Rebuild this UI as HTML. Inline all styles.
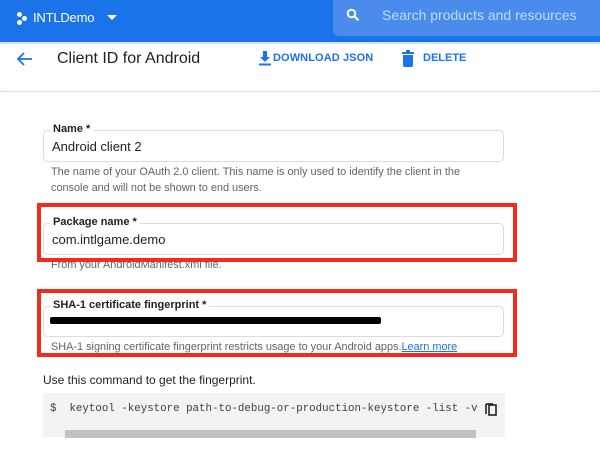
<!DOCTYPE html>
<html><head><style>
*{margin:0;padding:0;box-sizing:border-box}
body{width:600px;height:457px;overflow:hidden;background:#fff;font-family:"Liberation Sans",sans-serif;position:relative}
.a{position:absolute}
.field{position:absolute;border:1px solid #dadce0;border-radius:5px;left:43px;width:461px}
.lbl{position:absolute;top:-8px;left:6px;background:#fff;padding:0 3px;font-size:11px;font-weight:bold;color:#202124}
.val{position:absolute;left:8px;top:8px;font-size:13px;color:#202124}
.help{position:absolute;left:51px;font-size:10.9px;color:#5f6368;line-height:16px}
.red{position:absolute;border:4px solid #f22b1f}
</style></head><body>
<div class="a" style="left:0;top:0;width:600px;height:42px;background:#1a73e8"></div>
<div class="a" style="left:17px;top:12px;width:5px;height:5px;border-radius:50%;background:#fff"></div>
<div class="a" style="left:17px;top:20px;width:5px;height:5px;border-radius:50%;background:#fff"></div>
<div class="a" style="left:22px;top:16px;width:5px;height:5px;border-radius:50%;background:#fff"></div>
<div class="a" style="left:33px;top:10px;color:#fff;font-size:13px;letter-spacing:-0.2px">INTLDemo</div>
<div class="a" style="left:107px;top:15px;width:0;height:0;border-left:5px solid transparent;border-right:5px solid transparent;border-top:5px solid #fff"></div>
<div class="a" style="left:333px;top:0;width:267px;height:36px;background:#4a8bec;border-radius:0 0 0 6px"></div>
<svg class="a" style="left:346px;top:8px" width="14" height="14" viewBox="0 0 14 14"><circle cx="5.5" cy="5.5" r="3.8" stroke="#fff" stroke-width="2" fill="none"/><path d="M8.5 8.5L12.5 12.5" stroke="#fff" stroke-width="2.2"/></svg>
<div class="a" style="left:382px;top:7px;color:#c6dafc;font-size:14px">Search products and resources</div>
<div class="a" style="left:0;top:42px;width:600px;height:50px;border-bottom:1px solid #e0e0e0;box-shadow:inset 0 3px 3px -2px rgba(0,0,0,.25)"></div>
<svg class="a" style="left:15px;top:51px" width="18" height="16" viewBox="0 0 18 16"><path d="M17 8H3M9 2L3 8l6 6" stroke="#1a73e8" stroke-width="1.8" fill="none"/></svg>
<div class="a" style="left:57px;top:50px;font-size:16px;color:#202124">Client ID for Android</div>
<svg class="a" style="left:259px;top:51px" width="12" height="15" viewBox="0 0 12 15"><path d="M4 0h4v6h3L6 11 1 6h3z" fill="#1a73e8"/><rect x="0" y="12.5" width="12" height="2" fill="#1a73e8"/></svg>
<div class="a" style="left:273px;top:52px;font-size:11px;color:#1a73e8;font-weight:bold;letter-spacing:.1px">DOWNLOAD JSON</div>
<svg class="a" style="left:402px;top:50px" width="12" height="17" viewBox="0 0 12 17"><rect x="0" y="2" width="12" height="2" fill="#1a73e8"/><rect x="4" y="0" width="4" height="2" fill="#1a73e8"/><path d="M1 5h10v10a2 2 0 0 1-2 2H3a2 2 0 0 1-2-2z" fill="#1a73e8"/></svg>
<div class="a" style="left:423px;top:52px;font-size:11px;color:#1a73e8;font-weight:bold">DELETE</div>

<div class="field" style="top:130px;height:32px"><div class="lbl">Name *</div><div class="val">Android client 2</div></div>
<div class="help" style="top:164px">The name of your OAuth 2.0 client. This name is only used to identify the client in the<br>console and will not be shown to end users.</div>

<div class="field" style="top:223px;height:32px"><div class="lbl">Package name *</div><div class="val">com.intlgame.demo</div></div>
<div class="help" style="top:257px">From your AndroidManifest.xml file.</div>
<div class="red" style="left:37px;top:203px;width:480px;height:59px"></div>

<div class="field" style="top:306px;height:31px"><div class="lbl">SHA-1 certificate fingerprint *</div></div>
<div class="a" style="left:50px;top:317px;width:331px;height:7px;background:#000;border-radius:2px"></div>
<div class="help" style="top:339px">SHA-1 signing certificate fingerprint restricts usage to your Android apps.<span style="color:#1a73e8;text-decoration:underline">Learn more</span></div>
<div class="red" style="left:37px;top:289px;width:480px;height:68px"></div>

<div class="a" style="left:43px;top:373px;font-size:12px;color:#202124">Use this command to get the fingerprint.</div>
<div class="a" style="left:43px;top:393px;width:462px;height:44px;background:#f1f3f4"></div>
<div class="a" style="left:50px;top:403px;font-family:'Liberation Mono',monospace;font-size:10.8px;color:#3c4043;white-space:pre">$  keytool -keystore path-to-debug-or-production-keystore -list -v</div>
<svg class="a" style="left:485px;top:402px" width="12" height="14" viewBox="0 0 12 14"><path d="M1 2v10" stroke="#202124" stroke-width="1.6"/><rect x="4" y="3" width="7" height="10" stroke="#202124" stroke-width="1.6" fill="none"/><path d="M1 2h7" stroke="#202124" stroke-width="1.6"/></svg>
<div class="a" style="left:65px;top:430px;width:411px;height:8px;background:#c1c1c1"></div>
</body></html>
